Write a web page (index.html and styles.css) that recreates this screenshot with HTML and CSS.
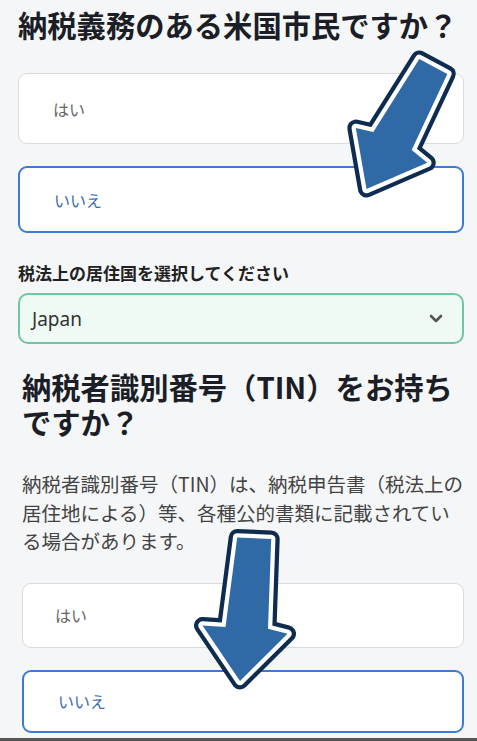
FILE: index.html
```html
<!DOCTYPE html>
<html lang="ja">
<head>
<meta charset="utf-8">
<title>TIN</title>
<link rel="stylesheet" href="styles.css">
</head>
<body>
<div class="page">
  <section class="sec sec-a">
    <h1 class="q">納税義務のある米国市民ですか？</h1>
    <div class="opts opts-a">
      <div class="opt opt-yes">はい</div>
      <div class="opt opt-no">いいえ</div>
    </div>
    <div class="lbl">税法上の居住国を選択してください</div>
    <div class="select">
      <span class="select-val">Japan</span>
      <svg class="chev" width="14" height="9" viewBox="0 0 14 9"><path d="M2 2 L7 7 L12 2" fill="none" stroke="#555" stroke-width="2.6" stroke-linecap="round" stroke-linejoin="round"/></svg>
    </div>
  </section>
  <section class="sec sec-b">
    <h2 class="q q2">納税者識別番号（TIN）をお持ちですか？</h2>
    <p class="desc">納税者識別番号（TIN）は、納税申告書（税法上の居住地による）等、各種公的書類に記載されている場合があります。</p>
    <div class="opts opts-b">
      <div class="opt opt-yes">はい</div>
      <div class="opt opt-no">いいえ</div>
    </div>
  </section>
  <div class="bottom-bar"></div>
  <svg class="arrows" width="477" height="741" viewBox="0 0 477 741">
    <g stroke-linejoin="round">
      <polygon points="419.3,59 447.3,74 411.7,150 427.3,162.8 366.5,189 355.8,128 373.3,132" fill="#0e2b50" stroke="#0e2b50" stroke-width="17"/>
      <polygon points="419.3,59 447.3,74 411.7,150 427.3,162.8 366.5,189 355.8,128 373.3,132" fill="#ffffff" stroke="#ffffff" stroke-width="8.5"/>
      <polygon points="419.3,59 447.3,74 411.7,150 427.3,162.8 366.5,189 355.8,128 373.3,132" fill="#2f6aa7"/>
      <polygon points="237.2,537.5 271.2,539 268,628.8 287.5,633.8 240,681 202.5,625.5 225.5,627" fill="#0e2b50" stroke="#0e2b50" stroke-width="17"/>
      <polygon points="237.2,537.5 271.2,539 268,628.8 287.5,633.8 240,681 202.5,625.5 225.5,627" fill="#ffffff" stroke="#ffffff" stroke-width="8.5"/>
      <polygon points="237.2,537.5 271.2,539 268,628.8 287.5,633.8 240,681 202.5,625.5 225.5,627" fill="#2f6aa7"/>
    </g>
  </svg>
</div>
</body>
</html>
```
FILE: styles.css
```css
html, body {
  margin: 0;
  padding: 0;
}
body {
  background: #f5f6f7;
  font-family: "Noto Sans CJK JP", "Noto Sans", sans-serif;
}
.page {
  position: relative;
  width: 477px;
  height: 741px;
  box-sizing: border-box;
  padding-top: 7px;
  overflow: hidden;
}
.sec-a {
  margin: 0 13px 0 18px;
}
.sec-b {
  margin: 0 13px 0 22px;
}
.q {
  margin: 0;
  font-size: 29.3px;
  line-height: 34px;
  font-weight: 700;
  color: #1b1e26;
  white-space: nowrap;
}
.q2 {
  margin-top: 25px;
  line-height: 35px;
  white-space: normal;
}
.opts {
  display: flex;
  flex-direction: column;
  gap: 22px;
}
.opts-a {
  margin-top: 32px;
}
.opts-b {
  margin-top: 27px;
}
.opt {
  box-sizing: border-box;
  display: flex;
  align-items: center;
  padding-left: 34px;
  background: #ffffff;
  border: 1.5px solid #dadbdc;
  border-radius: 9px;
  font-size: 16px;
  color: #666;
}
.opt-no {
  border: 2px solid #3b7bd5;
  color: #3a6cb0;
}
.opts-a .opt-yes { height: 71px; }
.opts-a .opt-no { height: 67px; }
.opts-b .opt-yes { height: 65px; padding-left: 32px; }
.opts-b .opt-no { height: 63px; }
.lbl {
  margin-top: 28px;
  font-size: 17px;
  line-height: 24px;
  font-weight: 700;
  color: #222;
}
.select {
  margin-top: 8px;
  box-sizing: border-box;
  height: 51px;
  display: flex;
  align-items: center;
  justify-content: space-between;
  padding: 0 19px 0 12px;
  background: #effaf5;
  border: 2px solid #6ec6a4;
  border-radius: 10px;
}
.select-val {
  font-family: "Noto Sans", sans-serif;
  font-size: 19px;
  color: #333;
}
.chev {
  display: block;
}
.desc {
  margin: 31px 0 0;
  font-size: 19.5px;
  line-height: 28.5px;
  color: #444;
}
.bottom-bar {
  position: absolute;
  left: 0;
  right: 0;
  bottom: 0;
  height: 3px;
  background: #555;
}
.arrows {
  position: absolute;
  left: 0;
  top: 0;
  pointer-events: none;
}
```
